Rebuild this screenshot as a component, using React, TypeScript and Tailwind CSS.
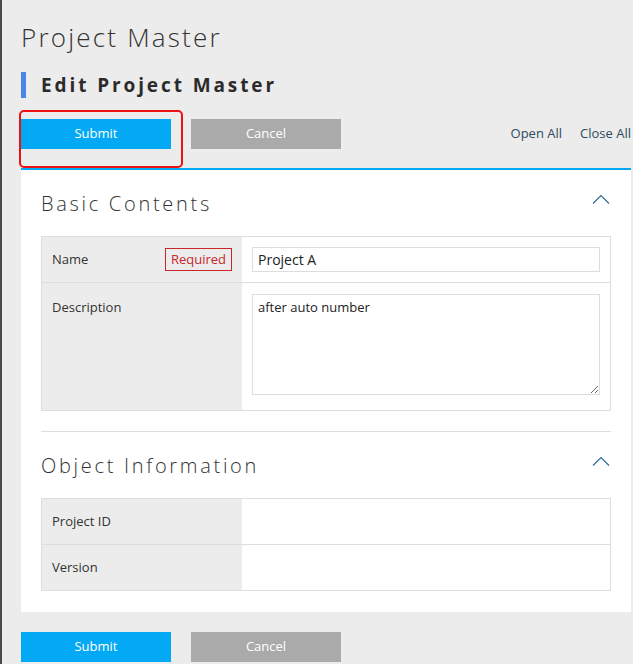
import React from "react";

const font = { fontFamily: '"Open Sans", "Noto Sans", sans-serif' };

function Chevron() {
  return (
    <svg width="18" height="10" viewBox="0 0 18 10" className="block">
      <path d="M1 9.5 L9 1.5 L17 9.5" fill="none" stroke="#2f6c94" strokeWidth="1.2" />
    </svg>
  );
}

function SectionHeader({ title }: { title: string }) {
  return (
    <div className="flex h-[66px] items-center justify-between">
      <h3 className="pt-[2px] text-[20px] font-light tracking-[2.7px] text-[#333]">{title}</h3>
      <div className="mr-[1px] mb-[8px]">
        <Chevron />
      </div>
    </div>
  );
}

function Buttons() {
  return (
    <div className="flex gap-[20px]">
      <button className="h-[30px] w-[150px] bg-[#03a9f4] text-[13px] text-white">Submit</button>
      <button className="h-[30px] w-[150px] bg-[#aaaaaa] text-[13px] text-white">Cancel</button>
    </div>
  );
}

export default function App() {
  return (
    <div
      style={font}
      className="min-h-[664px] border-l-2 border-[#4a4a4a] bg-[#ececec] pr-[2px] pl-[19px] pt-[20px] text-[#333]"
    >
      <h1 className="text-[26px] leading-[34px] font-light tracking-[2.2px] text-[#333]">Project Master</h1>
      <div className="mt-[18px] flex h-[26px] items-center">
        <span className="h-[26px] w-[5px] bg-[#4a86e8]" />
        <h2 className="ml-[15px] text-[19px] font-bold tracking-[2.9px] text-[#2b2b2b]">Edit Project Master</h2>
      </div>

      <div className="mt-[21px] flex items-center justify-between">
        <div className="relative">
          <Buttons />
          <div className="pointer-events-none absolute top-[-9px] left-[-2px] h-[58px] w-[164px] rounded-[5px] border-2 border-[#ee1111]" />
        </div>
        <div className="flex gap-[18px] text-[13px] text-[#2f4b60]">
          <a>Open All</a>
          <a>Close All</a>
        </div>
      </div>

      <div className="mt-[19px] border-t-2 border-[#03a9f4] bg-white px-[20px] pb-[21px]">
        <SectionHeader title="Basic Contents" />
        <div className="border border-[#dddddd] text-[13px]">
          <div className="grid grid-cols-[200px_1fr] border-b border-[#dddddd]">
            <div className="flex items-center justify-between bg-[#ececec] pr-[10px] pl-[10px]">
              <span>Name</span>
              <span className="flex h-[23px] w-[67px] items-center justify-center border border-[#c62828] text-[#c62828]">
                Required
              </span>
            </div>
            <div className="px-[10px] py-[10px]">
              <input
                defaultValue="Project A"
                className="block h-[25px] w-full border border-[#dddddd] px-[5px] text-[14px] text-[#222] outline-none"
              />
            </div>
          </div>
          <div className="grid grid-cols-[200px_1fr]">
            <div className="bg-[#ececec] pt-[15px] pl-[10px]">Description</div>
            <div className="px-[10px] pt-[11px] pb-[15px]">
              <textarea
                defaultValue="after auto number"
                className="block h-[101px] w-full border border-[#dddddd] px-[5px] pt-[3px] text-[13px] text-[#222] outline-none"
              />
            </div>
          </div>
        </div>

        <div className="mt-[20px] border-t border-[#dddddd]">
          <SectionHeader title="Object Information" />
          <div className="border border-[#dddddd] text-[13px]">
            <div className="grid h-[46px] grid-cols-[200px_1fr] border-b border-[#dddddd]">
              <div className="flex items-center bg-[#ececec] pl-[10px]">Project ID</div>
              <div />
            </div>
            <div className="grid h-[45px] grid-cols-[200px_1fr]">
              <div className="flex items-center bg-[#ececec] pl-[10px]">Version</div>
              <div />
            </div>
          </div>
        </div>
      </div>

      <div className="mt-[20px] pb-[3px]">
        <Buttons />
      </div>
    </div>
  );
}
